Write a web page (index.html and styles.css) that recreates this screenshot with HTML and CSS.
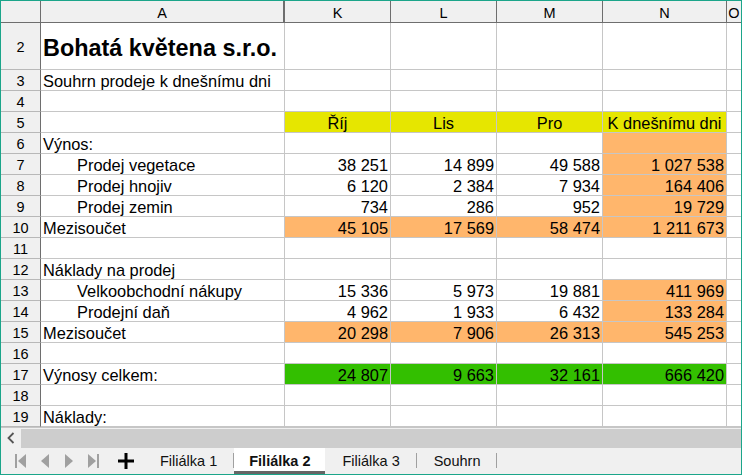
FILE: index.html
```html
<!DOCTYPE html>
<html lang="cs">
<head>
  <meta charset="UTF-8">
  <title>Souhrn prodeje</title>
  <link rel="stylesheet" href="styles.css">
</head>
<body>

<div class="window">
  <div class="sheet">
    <!-- Záhlaví sloupců -->
    <div class="row head">
      <div class="c corner"></div>
      <div class="c colhead wide">A</div>
      <div class="c colhead">K</div>
      <div class="c colhead">L</div>
      <div class="c colhead">M</div>
      <div class="c colhead">N</div>
      <div class="c colhead last">O</div>
    </div>

    <div class="row tall">
      <div class="c rh">2</div>
      <div class="c title">Bohatá květena s.r.o.</div>
      <div class="c"></div><div class="c"></div><div class="c"></div><div class="c"></div><div class="c last"></div>
    </div>
    <div class="row">
      <div class="c rh">3</div>
      <div class="c">Souhrn prodeje k dnešnímu dni</div>
      <div class="c"></div><div class="c"></div><div class="c"></div><div class="c"></div><div class="c last"></div>
    </div>
    <div class="row">
      <div class="c rh">4</div>
      <div class="c"></div>
      <div class="c"></div><div class="c"></div><div class="c"></div><div class="c"></div><div class="c last"></div>
    </div>
    <div class="row">
      <div class="c rh">5</div>
      <div class="c"></div>
      <div class="c ctr yellow">Říj</div>
      <div class="c ctr yellow">Lis</div>
      <div class="c ctr yellow">Pro</div>
      <div class="c ctr yellow">K dnešnímu dni</div>
      <div class="c last"></div>
    </div>
    <div class="row">
      <div class="c rh">6</div>
      <div class="c">Výnos:</div>
      <div class="c"></div><div class="c"></div><div class="c"></div>
      <div class="c orange"></div>
      <div class="c last"></div>
    </div>
    <div class="row">
      <div class="c rh">7</div>
      <div class="c ind">Prodej vegetace</div>
      <div class="c num">38 251</div>
      <div class="c num">14 899</div>
      <div class="c num">49 588</div>
      <div class="c num orange">1 027 538</div>
      <div class="c last"></div>
    </div>
    <div class="row">
      <div class="c rh">8</div>
      <div class="c ind">Prodej hnojiv</div>
      <div class="c num">6 120</div>
      <div class="c num">2 384</div>
      <div class="c num">7 934</div>
      <div class="c num orange">164 406</div>
      <div class="c last"></div>
    </div>
    <div class="row">
      <div class="c rh">9</div>
      <div class="c ind">Prodej zemin</div>
      <div class="c num">734</div>
      <div class="c num">286</div>
      <div class="c num">952</div>
      <div class="c num orange">19 729</div>
      <div class="c last"></div>
    </div>
    <div class="row">
      <div class="c rh">10</div>
      <div class="c">Mezisoučet</div>
      <div class="c num orange">45 105</div>
      <div class="c num orange">17 569</div>
      <div class="c num orange">58 474</div>
      <div class="c num orange">1 211 673</div>
      <div class="c last"></div>
    </div>
    <div class="row">
      <div class="c rh">11</div>
      <div class="c"></div>
      <div class="c"></div><div class="c"></div><div class="c"></div><div class="c"></div><div class="c last"></div>
    </div>
    <div class="row">
      <div class="c rh">12</div>
      <div class="c">Náklady na prodej</div>
      <div class="c"></div><div class="c"></div><div class="c"></div><div class="c"></div><div class="c last"></div>
    </div>
    <div class="row">
      <div class="c rh">13</div>
      <div class="c ind">Velkoobchodní nákupy</div>
      <div class="c num">15 336</div>
      <div class="c num">5 973</div>
      <div class="c num">19 881</div>
      <div class="c num orange">411 969</div>
      <div class="c last"></div>
    </div>
    <div class="row">
      <div class="c rh">14</div>
      <div class="c ind">Prodejní daň</div>
      <div class="c num">4 962</div>
      <div class="c num">1 933</div>
      <div class="c num">6 432</div>
      <div class="c num orange">133 284</div>
      <div class="c last"></div>
    </div>
    <div class="row">
      <div class="c rh">15</div>
      <div class="c">Mezisoučet</div>
      <div class="c num orange">20 298</div>
      <div class="c num orange">7 906</div>
      <div class="c num orange">26 313</div>
      <div class="c num orange">545 253</div>
      <div class="c last"></div>
    </div>
    <div class="row">
      <div class="c rh">16</div>
      <div class="c"></div>
      <div class="c"></div><div class="c"></div><div class="c"></div><div class="c"></div><div class="c last"></div>
    </div>
    <div class="row">
      <div class="c rh">17</div>
      <div class="c">Výnosy celkem:</div>
      <div class="c num green">24 807</div>
      <div class="c num green">9 663</div>
      <div class="c num green">32 161</div>
      <div class="c num green">666 420</div>
      <div class="c last"></div>
    </div>
    <div class="row">
      <div class="c rh">18</div>
      <div class="c"></div>
      <div class="c"></div><div class="c"></div><div class="c"></div><div class="c"></div><div class="c last"></div>
    </div>
    <div class="row">
      <div class="c rh">19</div>
      <div class="c">Náklady:</div>
      <div class="c"></div><div class="c"></div><div class="c"></div><div class="c"></div><div class="c last"></div>
    </div>
  </div>

  <!-- Vodorovný posuvník -->
  <div class="hscroll">
    <div class="scroll-btn">
      <svg width="8" height="12" viewBox="0 0 8 12"><path d="M6.5 1 L1.5 6 L6.5 11" fill="none" stroke="#555" stroke-width="1.8"/></svg>
    </div>
    <div class="track"></div>
  </div>

  <!-- Listy -->
  <div class="tabbar">
    <div class="nav">
      <svg width="11" height="14" viewBox="0 0 11 14"><rect x="0" y="0" width="2" height="14" fill="#a0a0a0"/><path d="M11 0 L3 7 L11 14 Z" fill="#a0a0a0"/></svg>
      <svg width="10" height="14" viewBox="0 0 10 14"><path d="M9 0 L1 7 L9 14 Z" fill="#a0a0a0"/></svg>
      <svg width="10" height="14" viewBox="0 0 10 14"><path d="M1 0 L9 7 L1 14 Z" fill="#a0a0a0"/></svg>
      <svg width="11" height="14" viewBox="0 0 11 14"><path d="M0 0 L8 7 L0 14 Z" fill="#a0a0a0"/><rect x="9" y="0" width="2" height="14" fill="#a0a0a0"/></svg>
    </div>
    <svg class="plus" width="16" height="16" viewBox="0 0 16 16"><path d="M8 0 V16 M0 8 H16" stroke="#000" stroke-width="3"/></svg>
    <div class="tabs">
      <div class="tab">Filiálka 1</div>
      <div class="tab active">Filiálka 2</div>
      <div class="tab">Filiálka 3</div>
      <div class="tab">Souhrn</div>
    </div>
  </div>
</div>

</body>
</html>
```

FILE: styles.css
```css
:root {
  --grid: #c6c6c6;
  --head-bg: #f0f0f0;
  --head-line: #6e6e6e;
  --yellow: #e6e600;
  --orange: #ffb66c;
  --green: #33bf00;
}

body {
  margin: 0;
  font-family: "Liberation Sans", Arial, sans-serif;
  color: #000;
  background: #fff;
}

.window {
  width: 742px;
  height: 475px;
  box-sizing: border-box;
  border: 1px solid #1ba58a;
  display: flex;
  flex-direction: column;
  overflow: hidden;
}

/* Mřížka listu */
.row {
  display: grid;
  grid-template-columns: 40px 244px 106px 106px 106px 124px 14px;
  height: 21px;
}

.row.head {
  height: 22px;
}

.row.tall {
  height: 47px;
}

.c {
  box-sizing: border-box;
  border-right: 1px solid var(--grid);
  border-bottom: 1px solid var(--grid);
  font-size: 16.4px;
  line-height: 20px;
  padding: 2px 2px 0;
  white-space: nowrap;
  overflow: hidden;
  display: flex;
  align-items: center;
}

.c.last {
  border-right: none;
}

.corner,
.colhead,
.rh {
  background: var(--head-bg);
  font-size: 14.5px;
  justify-content: center;
}

.corner,
.colhead {
  border-right-color: var(--head-line);
  border-bottom-color: var(--head-line);
}

.colhead.wide {
  border-right-width: 2px;
}

.rh {
  border-right-color: var(--head-line);
  border-bottom-color: #b8b8b8;
}

.title {
  font-size: 23.4px;
  font-weight: bold;
  padding-top: 4px;
}

.ind {
  padding-left: 36px;
}

.num {
  justify-content: flex-end;
}

.ctr {
  justify-content: center;
}

.yellow { background: var(--yellow); }
.orange { background: var(--orange); }
.green { background: var(--green); }

/* Posuvník */
.hscroll {
  display: flex;
  height: 20px;
  background: var(--head-bg);
  border-top: 1px solid var(--grid);
}

.scroll-btn {
  width: 20px;
  display: flex;
  align-items: center;
  justify-content: center;
}

.track {
  flex: 1;
  margin-top: 1px;
  background: #cdcdcd;
}

/* Záložky listů */
.tabbar {
  flex: 1;
  display: flex;
  align-items: stretch;
  background: var(--head-bg);
}

.nav {
  display: flex;
  align-items: center;
  gap: 14px;
  padding-left: 14px;
}

.plus {
  align-self: center;
  margin-left: 19px;
  margin-right: 9px;
}

.tabs {
  display: flex;
  align-items: stretch;
}

.tab {
  position: relative;
  font-size: 14.5px;
  padding: 0 17px;
  display: flex;
  align-items: center;
  color: #111;
}

.tab::after {
  content: "";
  position: absolute;
  right: 0;
  top: 5px;
  bottom: 6px;
  width: 1px;
  background: #a0a0a0;
}

.tab.active {
  background: #fff;
  font-weight: bold;
  padding: 0 15px;
  box-shadow: inset 0 -3px 0 #666;
}

.tab.active::after {
  display: none;
}
```
